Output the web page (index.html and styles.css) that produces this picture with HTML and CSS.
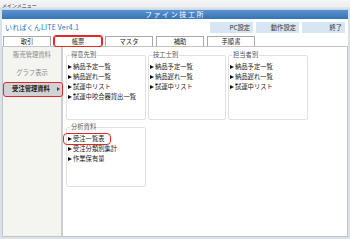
FILE: index.html
```html
<!DOCTYPE html>
<html lang="ja">
<head>
<meta charset="utf-8">
<title>メインメニュー</title>
<link rel="stylesheet" href="styles.css">
</head>
<body>
<div class="titlebar">メインメニュー</div>
<div class="window">
  <div class="header">ファイン技工所</div>
  <div class="toprow">
    <div class="version">いればくんLITE Ver4.1</div>
    <div class="btns">
      <div class="btn">PC設定</div>
      <div class="btn">動作設定</div>
      <div class="btn">終了</div>
    </div>
  </div>
  <div class="tabs">
    <div class="tab">取引</div>
    <div class="tab active">帳票</div>
    <div class="tab">マスタ</div>
    <div class="tab">補助</div>
    <div class="tab">手順書</div>
  </div>
  <div class="panel">
    <div class="sidebar">
      <div class="side-item">販売管理資料</div>
      <div class="side-item second">グラフ表示</div>
      <div class="side-btn">受注管理資料</div>
    </div>
    <div class="content">
      <div class="row first">
        <fieldset class="group w80">
          <legend>得意先別</legend>
          <div class="item">納品予定一覧</div>
          <div class="item">納品遅れ一覧</div>
          <div class="item">試運中リスト</div>
          <div class="item">試運中咬合器貸出一覧</div>
        </fieldset>
        <fieldset class="group w78">
          <legend>技工士別</legend>
          <div class="item">納品予定一覧</div>
          <div class="item">納品遅れ一覧</div>
          <div class="item">試運中リスト</div>
        </fieldset>
        <fieldset class="group w80">
          <legend>担当者別</legend>
          <div class="item">納品予定一覧</div>
          <div class="item">納品遅れ一覧</div>
          <div class="item">試運中リスト</div>
        </fieldset>
      </div>
      <div class="row second">
        <fieldset class="group w80 tall">
          <legend>分析資料</legend>
          <div class="item"><span class="sel">受注一覧表</span></div>
          <div class="item">受注分類別集計</div>
          <div class="item">作業保有量</div>
        </fieldset>
      </div>
    </div>
  </div>
</div>
</body>
</html>
```

FILE: styles.css
```css
* { box-sizing: border-box; }
html, body {
  margin: 0;
  padding: 0;
}
body {
  width: 350px;
  height: 239px;
  overflow: hidden;
  background: #d8e1ec;
  font-family: "Noto Sans CJK JP", "Noto Sans", sans-serif;
  color: #222;
}
.titlebar {
  height: 10px;
  line-height: 9px;
  font-size: 5px;
  padding-left: 2px;
  color: #333;
  background: linear-gradient(#f6f6f6 0%, #eceef2 65%, #c7d4e4 100%);
}
.window {
  margin: 0 2px;
  height: 227px;
  background: #fff;
}
.header {
  height: 9px;
  line-height: 9px;
  text-align: center;
  color: #fff;
  font-size: 7px;
  letter-spacing: 1.6px;
  background: linear-gradient(#5a94ce, #3674b6);
}
.toprow {
  height: 17px;
  display: flex;
  justify-content: space-between;
  padding: 3px 3px 0 3px;
}
.version {
  color: #2a72bf;
  font-size: 7px;
  line-height: 11px;
  letter-spacing: 0.2px;
}
.btns {
  display: flex;
  gap: 3px;
}
.btn {
  width: 43px;
  height: 11px;
  line-height: 11px;
  font-size: 6.3px;
  text-align: right;
  padding-right: 3px;
  background: #d8e6f3;
  color: #333;
}
.tabs {
  height: 10px;
  display: flex;
  gap: 3px;
  padding-left: 1px;
}
.tab {
  width: 48px;
  height: 10px;
  border: 1px solid #a9a9a9;
  border-bottom: none;
  font-size: 6.3px;
  line-height: 9px;
  text-align: center;
  color: #222;
  background: #fff;
}
.tab.active {
  border-color: #e02a2a;
  outline: 1px solid #e02a2a;
  border-radius: 2px;
}
.panel {
  height: 191px;
  display: flex;
  border: 1px solid #c4c4c4;
}
.sidebar {
  width: 60px;
  flex: none;
  background: #f4f4f1;
  border-right: 2px solid #cdcdcd;
}
.side-item {
  height: 16px;
  line-height: 16px;
  text-align: center;
  font-size: 6.3px;
  color: #8a8a8a;
}
.side-item.second {
  margin-top: 2px;
}
.side-btn {
  position: relative;
  margin-top: 1px;
  margin-right: -2px;
  height: 15px;
  line-height: 12px;
  text-align: center;
  font-size: 6.3px;
  font-weight: bold;
  color: #222;
  background: #d2d2d2;
  border: 1.5px solid #e02a2a;
  border-radius: 3px;
  padding-right: 4px;
}
.side-btn::after {
  content: "";
  position: absolute;
  right: 2px;
  top: 4px;
  border-left: 3px solid #444;
  border-top: 2.5px solid transparent;
  border-bottom: 2.5px solid transparent;
}
.content {
  flex: 1;
  padding: 4px 0 0 3px;
  background: #fff;
}
.row {
  display: flex;
  gap: 2px;
}
.row.second {
  margin-top: 3px;
}
.group {
  margin: 0;
  flex: none;
  padding: 3px 0 17px 1px;
  border: 1px solid #e0e0e0;
  border-radius: 2px;
  min-width: 0;
}
.group.tall {
  padding-bottom: 22px;
}
.w80 { width: 80px; }
.w78 { width: 78px; }
.group legend {
  font-size: 6.3px;
  line-height: 8px;
  padding: 0 1px;
  margin-left: 2px;
  color: #555;
}
.item {
  font-size: 6.3px;
  line-height: 10px;
  white-space: nowrap;
  color: #1a1a1a;
}
.item::before {
  content: "";
  display: inline-block;
  vertical-align: middle;
  margin-right: 1px;
  border-left: 4px solid #111;
  border-top: 2.5px solid transparent;
  border-bottom: 2.5px solid transparent;
  margin-top: -1px;
}
.sel {
  display: inline-block;
  border-radius: 3px;
  outline: 1.5px solid #e02a2a;
  padding: 0 6px 0 9px;
  margin-left: -9px;
  height: 10px;
  vertical-align: top;
}
```
